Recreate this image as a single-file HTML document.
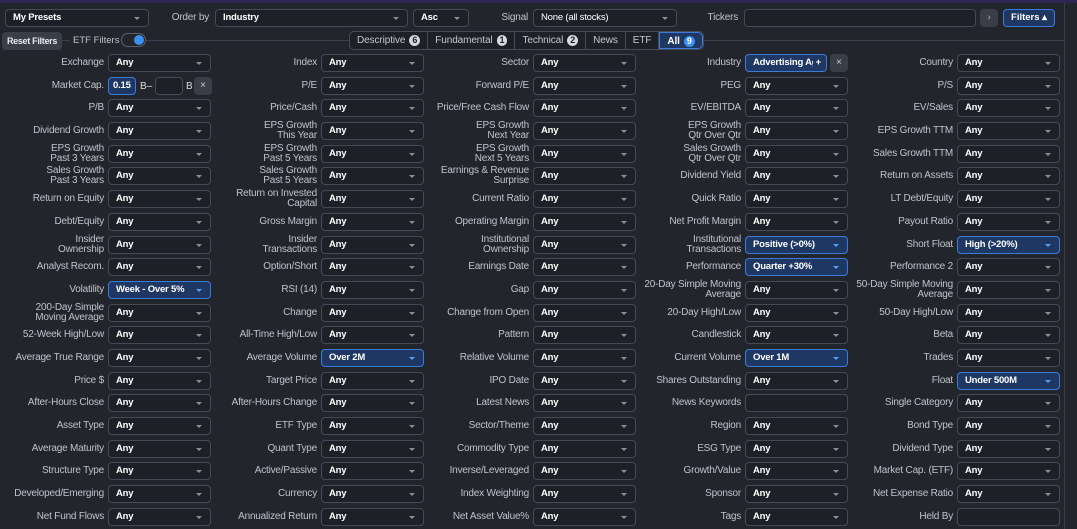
<!DOCTYPE html>
<html><head><meta charset="utf-8"><style>
*{box-sizing:border-box;margin:0;padding:0}
body{width:1077px;height:529px;background:#22252c;font-family:"Liberation Sans",sans-serif;font-size:10px;color:#fff;position:relative;overflow:hidden}
.top{position:absolute;left:0;top:0;width:1077px;height:3px;background:#2f2456}
.vl{position:absolute;left:1064px;top:3px;width:1px;height:526px;background:#3a3e48}
.a{position:absolute;white-space:nowrap}
.sel{position:absolute;height:18px;border:1px solid #454a56;border-radius:4px;background:#1d2026;color:#fff;font-weight:bold;font-size:9.5px;line-height:16px;padding-left:7px;white-space:nowrap;overflow:hidden;letter-spacing:-0.2px}
.sel::after{content:"";position:absolute;right:8px;top:7px;border-left:3px solid transparent;border-right:3px solid transparent;border-top:3px solid #8a8f9a}
.hl{background:#1e3763;border-color:#3c7bd8}
.hl::after{border-top-color:#5aa0f0}
.lbl{position:absolute;color:#bfc3cb;text-align:right;line-height:10px;font-size:10px;letter-spacing:-0.2px}
.rows{position:absolute;left:0;top:52px}
.row{position:relative;height:22.7px;width:1064px}
.c{position:absolute;top:0;height:22px;width:212px}
.c .lbl{right:108px;width:110px;top:50%;transform:translateY(-50%)}
.c .sel{left:108px;width:103px;top:2px}
.nt::after{display:none}
.tabs{position:absolute;left:349px;top:31px;height:19px;border:1px solid #454a56;border-radius:5px;display:flex;background:#1d2026;overflow:hidden}
.tab{padding:0 7px;line-height:17px;color:#c4c8cf;border-right:1px solid #454a56;font-size:10px;white-space:nowrap;letter-spacing:-0.1px}
.b{display:inline-block;background:#d5d8de;color:#1d2026;border-radius:7px;font-weight:bold;padding:0 3px;line-height:11px;font-size:9px;margin-left:4px}
</style></head><body>
<div class="top"></div><div class="vl"></div>
<div class="sel" style="left:5px;top:9px;width:144px">My Presets</div>
<div class="lbl" style="left:150px;top:13px;width:59px">Order by</div>
<div class="sel" style="left:215px;top:9px;width:193px">Industry</div>
<div class="sel" style="left:413px;top:9px;width:56px">Asc</div>
<div class="lbl" style="left:480px;top:13px;width:48px">Signal</div>
<div class="sel" style="left:533px;top:9px;width:144px;font-weight:normal">None (all stocks)</div>
<div class="lbl" style="left:690px;top:13px;width:48px">Tickers</div>
<div class="sel nt" style="left:744px;top:9px;width:232px"></div>
<div class="a" style="left:980px;top:9px;width:18px;height:18px;background:#3a3e48;border-radius:4px;color:#aaa;text-align:center;line-height:18px">›</div>
<div class="a" style="left:1003px;top:9px;width:52px;height:18px;background:#1e3763;border:1px solid #3c7bd8;border-radius:4px;font-weight:bold;line-height:16px;text-align:center;font-size:9.5px">Filters ▴</div>
<div class="a" style="left:60px;top:40px;width:1004px;height:1px;background:#3a3e48"></div>
<div class="a" style="left:2px;top:32px;width:60px;height:18px;background:#3a3e48;border-radius:4px;font-weight:bold;line-height:18px;text-align:center;color:#e6e8ec;font-size:9px;letter-spacing:-0.3px">Reset Filters</div>
<div class="a" style="left:70px;top:33px;padding:0 3px;background:#22252c;color:#bfc3cb;line-height:15px;font-size:9.5px">ETF Filters</div>
<div class="a" style="left:121px;top:33px;width:25px;height:14px;border:1px solid #5a5f6b;border-radius:8px;background:#22252c"><div style="position:absolute;right:1px;top:1px;width:10px;height:10px;border-radius:5px;background:#3a8ff0"></div></div>
<div class="tabs"><div class="tab">Descriptive<span class="b">6</span></div><div class="tab">Fundamental<span class="b">1</span></div><div class="tab">Technical<span class="b">2</span></div><div class="tab">News</div><div class="tab">ETF</div><div class="tab" style="background:#1e3763;color:#fff;font-weight:bold;border:1px solid #3c7bd8;border-radius:0 5px 5px 0">All<span class="b" style="background:#3a8ff0;color:#fff">9</span></div></div>
<div class="rows">
<div class="row"><div class="c" style="left:0"><div class="lbl">Exchange</div><div class="sel">Any</div></div><div class="c" style="left:213px"><div class="lbl">Index</div><div class="sel">Any</div></div><div class="c" style="left:425px"><div class="lbl">Sector</div><div class="sel">Any</div></div><div class="c" style="left:637px"><div class="lbl">Industry</div><div class="sel hl nt" style="width:82px"><span style="display:block;width:60px;overflow:hidden">Advertising Agencies</span><span style="position:absolute;right:5px;top:0">+</span></div><div class="a" style="left:193px;top:2px;width:18px;height:18px;background:#3a3e48;border-radius:4px;color:#ccc;text-align:center;line-height:18px">×</div></div><div class="c" style="left:849px"><div class="lbl">Country</div><div class="sel">Any</div></div></div>
<div class="row"><div class="c" style="left:0"><div class="lbl">Market Cap.</div><div class="sel hl nt" style="width:28px;padding-left:4px">0.15</div><div class="a" style="left:140px;top:6px;color:#ddd">B–</div><div class="sel nt" style="left:155px;width:28px"></div><div class="a" style="left:186px;top:6px;color:#ddd">B</div><div class="a" style="left:194px;top:2px;width:18px;height:18px;background:#3a3e48;border-radius:4px;color:#ccc;text-align:center;line-height:18px">×</div></div><div class="c" style="left:213px"><div class="lbl">P/E</div><div class="sel">Any</div></div><div class="c" style="left:425px"><div class="lbl">Forward P/E</div><div class="sel">Any</div></div><div class="c" style="left:637px"><div class="lbl">PEG</div><div class="sel">Any</div></div><div class="c" style="left:849px"><div class="lbl">P/S</div><div class="sel">Any</div></div></div>
<div class="row"><div class="c" style="left:0"><div class="lbl">P/B</div><div class="sel">Any</div></div><div class="c" style="left:213px"><div class="lbl">Price/Cash</div><div class="sel">Any</div></div><div class="c" style="left:425px"><div class="lbl">Price/Free Cash Flow</div><div class="sel">Any</div></div><div class="c" style="left:637px"><div class="lbl">EV/EBITDA</div><div class="sel">Any</div></div><div class="c" style="left:849px"><div class="lbl">EV/Sales</div><div class="sel">Any</div></div></div>
<div class="row"><div class="c" style="left:0"><div class="lbl">Dividend Growth</div><div class="sel">Any</div></div><div class="c" style="left:213px"><div class="lbl">EPS Growth<br>This Year</div><div class="sel">Any</div></div><div class="c" style="left:425px"><div class="lbl">EPS Growth<br>Next Year</div><div class="sel">Any</div></div><div class="c" style="left:637px"><div class="lbl">EPS Growth<br>Qtr Over Qtr</div><div class="sel">Any</div></div><div class="c" style="left:849px"><div class="lbl">EPS Growth TTM</div><div class="sel">Any</div></div></div>
<div class="row"><div class="c" style="left:0"><div class="lbl">EPS Growth<br>Past 3 Years</div><div class="sel">Any</div></div><div class="c" style="left:213px"><div class="lbl">EPS Growth<br>Past 5 Years</div><div class="sel">Any</div></div><div class="c" style="left:425px"><div class="lbl">EPS Growth<br>Next 5 Years</div><div class="sel">Any</div></div><div class="c" style="left:637px"><div class="lbl">Sales Growth<br>Qtr Over Qtr</div><div class="sel">Any</div></div><div class="c" style="left:849px"><div class="lbl">Sales Growth TTM</div><div class="sel">Any</div></div></div>
<div class="row"><div class="c" style="left:0"><div class="lbl">Sales Growth<br>Past 3 Years</div><div class="sel">Any</div></div><div class="c" style="left:213px"><div class="lbl">Sales Growth<br>Past 5 Years</div><div class="sel">Any</div></div><div class="c" style="left:425px"><div class="lbl">Earnings &amp; Revenue<br>Surprise</div><div class="sel">Any</div></div><div class="c" style="left:637px"><div class="lbl">Dividend Yield</div><div class="sel">Any</div></div><div class="c" style="left:849px"><div class="lbl">Return on Assets</div><div class="sel">Any</div></div></div>
<div class="row"><div class="c" style="left:0"><div class="lbl">Return on Equity</div><div class="sel">Any</div></div><div class="c" style="left:213px"><div class="lbl">Return on Invested<br>Capital</div><div class="sel">Any</div></div><div class="c" style="left:425px"><div class="lbl">Current Ratio</div><div class="sel">Any</div></div><div class="c" style="left:637px"><div class="lbl">Quick Ratio</div><div class="sel">Any</div></div><div class="c" style="left:849px"><div class="lbl">LT Debt/Equity</div><div class="sel">Any</div></div></div>
<div class="row"><div class="c" style="left:0"><div class="lbl">Debt/Equity</div><div class="sel">Any</div></div><div class="c" style="left:213px"><div class="lbl">Gross Margin</div><div class="sel">Any</div></div><div class="c" style="left:425px"><div class="lbl">Operating Margin</div><div class="sel">Any</div></div><div class="c" style="left:637px"><div class="lbl">Net Profit Margin</div><div class="sel">Any</div></div><div class="c" style="left:849px"><div class="lbl">Payout Ratio</div><div class="sel">Any</div></div></div>
<div class="row"><div class="c" style="left:0"><div class="lbl">Insider<br>Ownership</div><div class="sel">Any</div></div><div class="c" style="left:213px"><div class="lbl">Insider<br>Transactions</div><div class="sel">Any</div></div><div class="c" style="left:425px"><div class="lbl">Institutional<br>Ownership</div><div class="sel">Any</div></div><div class="c" style="left:637px"><div class="lbl">Institutional<br>Transactions</div><div class="sel hl">Positive (&gt;0%)</div></div><div class="c" style="left:849px"><div class="lbl">Short Float</div><div class="sel hl">High (&gt;20%)</div></div></div>
<div class="row"><div class="c" style="left:0"><div class="lbl">Analyst Recom.</div><div class="sel">Any</div></div><div class="c" style="left:213px"><div class="lbl">Option/Short</div><div class="sel">Any</div></div><div class="c" style="left:425px"><div class="lbl">Earnings Date</div><div class="sel">Any</div></div><div class="c" style="left:637px"><div class="lbl">Performance</div><div class="sel hl">Quarter +30%</div></div><div class="c" style="left:849px"><div class="lbl">Performance 2</div><div class="sel">Any</div></div></div>
<div class="row"><div class="c" style="left:0"><div class="lbl">Volatility</div><div class="sel hl">Week - Over 5%</div></div><div class="c" style="left:213px"><div class="lbl">RSI (14)</div><div class="sel">Any</div></div><div class="c" style="left:425px"><div class="lbl">Gap</div><div class="sel">Any</div></div><div class="c" style="left:637px"><div class="lbl">20-Day Simple Moving<br>Average</div><div class="sel">Any</div></div><div class="c" style="left:849px"><div class="lbl">50-Day Simple Moving<br>Average</div><div class="sel">Any</div></div></div>
<div class="row"><div class="c" style="left:0"><div class="lbl">200-Day Simple<br>Moving Average</div><div class="sel">Any</div></div><div class="c" style="left:213px"><div class="lbl">Change</div><div class="sel">Any</div></div><div class="c" style="left:425px"><div class="lbl">Change from Open</div><div class="sel">Any</div></div><div class="c" style="left:637px"><div class="lbl">20-Day High/Low</div><div class="sel">Any</div></div><div class="c" style="left:849px"><div class="lbl">50-Day High/Low</div><div class="sel">Any</div></div></div>
<div class="row"><div class="c" style="left:0"><div class="lbl">52-Week High/Low</div><div class="sel">Any</div></div><div class="c" style="left:213px"><div class="lbl">All-Time High/Low</div><div class="sel">Any</div></div><div class="c" style="left:425px"><div class="lbl">Pattern</div><div class="sel">Any</div></div><div class="c" style="left:637px"><div class="lbl">Candlestick</div><div class="sel">Any</div></div><div class="c" style="left:849px"><div class="lbl">Beta</div><div class="sel">Any</div></div></div>
<div class="row"><div class="c" style="left:0"><div class="lbl">Average True Range</div><div class="sel">Any</div></div><div class="c" style="left:213px"><div class="lbl">Average Volume</div><div class="sel hl">Over 2M</div></div><div class="c" style="left:425px"><div class="lbl">Relative Volume</div><div class="sel">Any</div></div><div class="c" style="left:637px"><div class="lbl">Current Volume</div><div class="sel hl">Over 1M</div></div><div class="c" style="left:849px"><div class="lbl">Trades</div><div class="sel">Any</div></div></div>
<div class="row"><div class="c" style="left:0"><div class="lbl">Price $</div><div class="sel">Any</div></div><div class="c" style="left:213px"><div class="lbl">Target Price</div><div class="sel">Any</div></div><div class="c" style="left:425px"><div class="lbl">IPO Date</div><div class="sel">Any</div></div><div class="c" style="left:637px"><div class="lbl">Shares Outstanding</div><div class="sel">Any</div></div><div class="c" style="left:849px"><div class="lbl">Float</div><div class="sel hl">Under 500M</div></div></div>
<div class="row"><div class="c" style="left:0"><div class="lbl">After-Hours Close</div><div class="sel">Any</div></div><div class="c" style="left:213px"><div class="lbl">After-Hours Change</div><div class="sel">Any</div></div><div class="c" style="left:425px"><div class="lbl">Latest News</div><div class="sel">Any</div></div><div class="c" style="left:637px"><div class="lbl">News Keywords</div><div class="sel nt"></div></div><div class="c" style="left:849px"><div class="lbl">Single Category</div><div class="sel">Any</div></div></div>
<div class="row"><div class="c" style="left:0"><div class="lbl">Asset Type</div><div class="sel">Any</div></div><div class="c" style="left:213px"><div class="lbl">ETF Type</div><div class="sel">Any</div></div><div class="c" style="left:425px"><div class="lbl">Sector/Theme</div><div class="sel">Any</div></div><div class="c" style="left:637px"><div class="lbl">Region</div><div class="sel">Any</div></div><div class="c" style="left:849px"><div class="lbl">Bond Type</div><div class="sel">Any</div></div></div>
<div class="row"><div class="c" style="left:0"><div class="lbl">Average Maturity</div><div class="sel">Any</div></div><div class="c" style="left:213px"><div class="lbl">Quant Type</div><div class="sel">Any</div></div><div class="c" style="left:425px"><div class="lbl">Commodity Type</div><div class="sel">Any</div></div><div class="c" style="left:637px"><div class="lbl">ESG Type</div><div class="sel">Any</div></div><div class="c" style="left:849px"><div class="lbl">Dividend Type</div><div class="sel">Any</div></div></div>
<div class="row"><div class="c" style="left:0"><div class="lbl">Structure Type</div><div class="sel">Any</div></div><div class="c" style="left:213px"><div class="lbl">Active/Passive</div><div class="sel">Any</div></div><div class="c" style="left:425px"><div class="lbl">Inverse/Leveraged</div><div class="sel">Any</div></div><div class="c" style="left:637px"><div class="lbl">Growth/Value</div><div class="sel">Any</div></div><div class="c" style="left:849px"><div class="lbl">Market Cap. (ETF)</div><div class="sel">Any</div></div></div>
<div class="row"><div class="c" style="left:0"><div class="lbl">Developed/Emerging</div><div class="sel">Any</div></div><div class="c" style="left:213px"><div class="lbl">Currency</div><div class="sel">Any</div></div><div class="c" style="left:425px"><div class="lbl">Index Weighting</div><div class="sel">Any</div></div><div class="c" style="left:637px"><div class="lbl">Sponsor</div><div class="sel">Any</div></div><div class="c" style="left:849px"><div class="lbl">Net Expense Ratio</div><div class="sel">Any</div></div></div>
<div class="row"><div class="c" style="left:0"><div class="lbl">Net Fund Flows</div><div class="sel">Any</div></div><div class="c" style="left:213px"><div class="lbl">Annualized Return</div><div class="sel">Any</div></div><div class="c" style="left:425px"><div class="lbl">Net Asset Value%</div><div class="sel">Any</div></div><div class="c" style="left:637px"><div class="lbl">Tags</div><div class="sel">Any</div></div><div class="c" style="left:849px"><div class="lbl">Held By</div><div class="sel nt"></div></div></div>
</div>
</body></html>
